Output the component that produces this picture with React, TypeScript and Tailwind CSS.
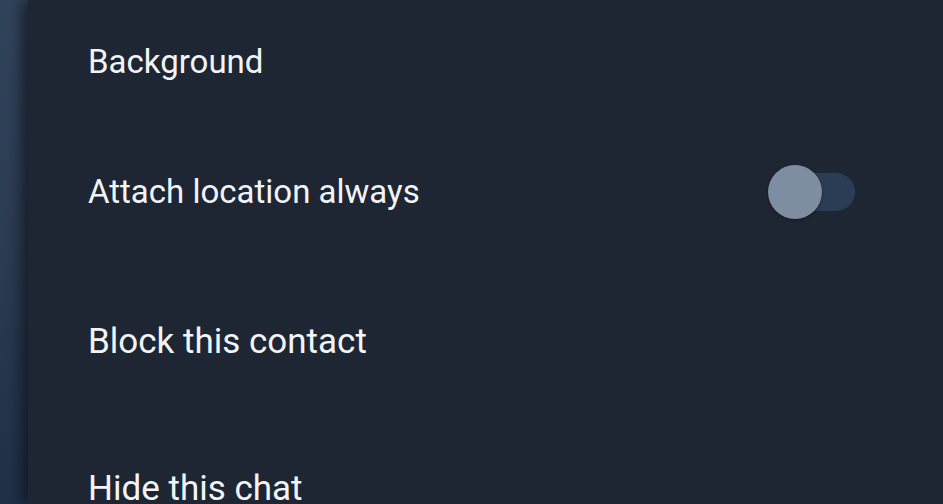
export default function App() {
  return (
    <div
      className="flex h-[504px] w-[943px] overflow-hidden bg-[#1e2633]"
      style={{ fontFamily: 'Roboto, "Noto Sans", sans-serif' }}
    >
      <div className="w-[28px] shrink-0 bg-gradient-to-b from-[#32445c] via-[#2b3c53] to-[#1f3048]" />
      <div className="relative flex flex-1 flex-col bg-[#1e2633] pl-[60px] pr-[88px] text-[33px] text-[#f2f4f7] shadow-[-6px_0_14px_rgba(10,14,22,0.7)]">
        <div className="mt-[22px] flex h-[80px] shrink-0 items-center">Background</div>
        <div className="mt-[50px] flex h-[80px] shrink-0 items-center justify-between">
          <span>Attach location always</span>
          <div className="relative h-[38px] w-[87px]">
            <div className="absolute right-0 top-0 h-[38px] w-[70px] rounded-full bg-[#2b3c55]" />
            <div className="absolute left-0 top-[-8px] h-[54px] w-[54px] rounded-full bg-[#7e8da2] shadow-[0_1px_3px_rgba(0,0,0,0.4)]" />
          </div>
        </div>
        <div className="mt-[70px] flex h-[80px] shrink-0 items-center text-[35px]">Block this contact</div>
        <div className="mt-[67px] flex h-[80px] shrink-0 items-center text-[35px]">Hide this chat</div>
      </div>
    </div>
  );
}
